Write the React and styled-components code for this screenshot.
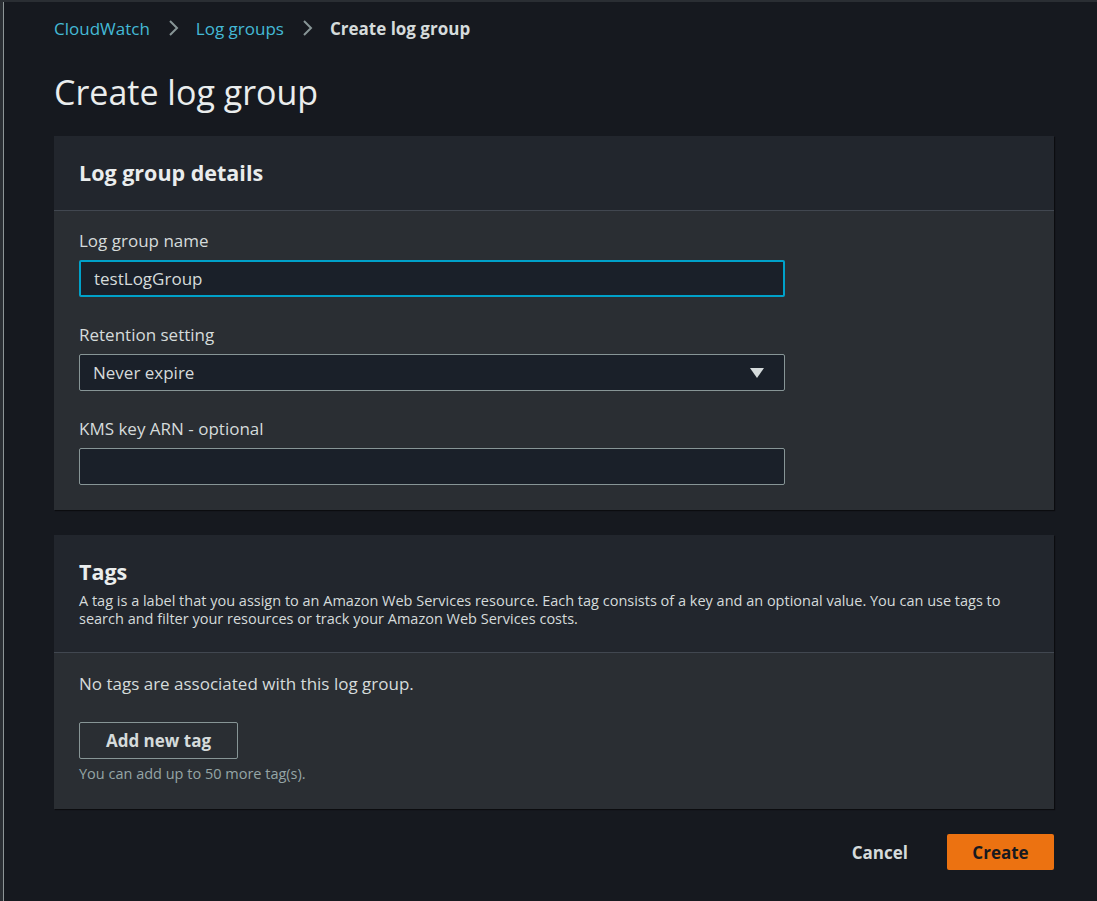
import React from 'react';
import styled, { createGlobalStyle } from 'styled-components';

const GlobalStyle = createGlobalStyle`
    html, body {
        margin: 0;
        padding: 0;
        background: #16191f;
    }
    body {
        font-family: "Open Sans", "Noto Sans", sans-serif;
        color: #d1d5db;
    }
`;

const Frame = styled.div`
    min-height: 901px;
    box-sizing: border-box;
    border-top: 2px solid #2a2e33;
    border-left: 3px solid #2a2e33;
    display: flex;
`;

const Edge = styled.div`
    width: 1px;
    background: #8d9596;
`;

const Page = styled.main`
    flex: 1;
    padding: 13px 43px 30px 50px;
    display: flex;
    flex-direction: column;
`;

const Crumbs = styled.nav`
    display: flex;
    align-items: center;
    gap: 17px;
    height: 26px;
    font-size: 17px;
`;

const CrumbLink = styled.a`
    color: #44b9d6;
    text-decoration: none;
`;

const CrumbCurrent = styled.span`
    color: #d5dbdb;
    font-weight: 700;
`;

const Title = styled.h1`
    margin: 31px 0 24px;
    font-size: 34px;
    font-weight: 400;
    color: #eaeded;
    line-height: 40px;
`;

const Panel = styled.section`
    background: #2a2e33;
    box-shadow: 1px 1px 1px rgba(0, 0, 0, 0.5);
    margin-bottom: 25px;
`;

const PanelHead = styled.header`
    background: #22262d;
    border-bottom: 1px solid #414750;
    padding: ${p => (p.$tall ? '23px 25px 24px' : '23px 25px 23px')};
`;

const PanelTitle = styled.h2`
    margin: 0;
    font-size: 21.5px;
    line-height: 28px;
    font-weight: 700;
    color: #eaeded;
`;

const PanelDesc = styled.p`
    margin: 6px 0 0;
    font-size: 14.5px;
    line-height: 18px;
    color: #d5dbdb;
`;

const PanelBody = styled.div`
    padding: ${p => p.$pad || '19px 25px 25px'};
    display: flex;
    flex-direction: column;
`;

const Field = styled.div`
    display: flex;
    flex-direction: column;
    margin-bottom: ${p => (p.$last ? '0' : '27px')};
`;

const Label = styled.label`
    font-size: 17px;
    line-height: 22px;
    margin-bottom: 8px;
    color: #d5dbdb;
`;

const TextInput = styled.div`
    box-sizing: border-box;
    width: 706px;
    height: 37px;
    background: #1a2029;
    border: ${p => (p.$focus ? '2px solid #00a1c9' : '1px solid #879596')};
    border-radius: 2px;
    display: flex;
    align-items: center;
    justify-content: space-between;
    padding: 0 ${p => (p.$focus ? '19px' : '20px')} 0 13px;
    font-size: 17px;
    color: #d5dbdb;
`;

const Caret = styled.span`
    width: 0;
    height: 0;
    border-left: 7px solid transparent;
    border-right: 7px solid transparent;
    border-top: 10px solid #d5dbdb;
`;

const Plain = styled.p`
    margin: 0 0 27px;
    font-size: 17px;
    line-height: 22px;
    color: #d5dbdb;
`;

const OutlineButton = styled.button`
    box-sizing: border-box;
    width: 159px;
    height: 37px;
    background: transparent;
    border: 1px solid #879596;
    border-radius: 2px;
    color: #d5dbdb;
    font-family: inherit;
    font-size: 17px;
    font-weight: 700;
    padding: 0;
`;

const Hint = styled.p`
    margin: 6px 0 0;
    font-size: 14.5px;
    line-height: 18px;
    color: #95a5a6;
`;

const Actions = styled.div`
    display: flex;
    justify-content: flex-end;
    align-items: center;
    gap: 39px;
`;

const TextButton = styled.button`
    background: none;
    border: none;
    padding: 0;
    color: #d5dbdb;
    font-family: inherit;
    font-size: 17px;
    font-weight: 700;
`;

const PrimaryButton = styled.button`
    width: 107px;
    height: 36px;
    background: #ec7211;
    border: none;
    border-radius: 2px;
    color: #16191f;
    font-family: inherit;
    font-size: 17px;
    font-weight: 700;
`;

const Chevron = () => (
    <svg width="12" height="18" viewBox="0 0 12 18" fill="none">
        <path d="M3 2l7 7-7 7" stroke="#879596" strokeWidth="2" />
    </svg>
);

const App = () => (
    <>
        <GlobalStyle />
        <Frame>
            <Edge />
            <Page>
                <Crumbs>
                    <CrumbLink href="#">CloudWatch</CrumbLink>
                    <Chevron />
                    <CrumbLink href="#">Log groups</CrumbLink>
                    <Chevron />
                    <CrumbCurrent>Create log group</CrumbCurrent>
                </Crumbs>
                <Title>Create log group</Title>

                <Panel>
                    <PanelHead>
                        <PanelTitle>Log group details</PanelTitle>
                    </PanelHead>
                    <PanelBody>
                        <Field>
                            <Label>Log group name</Label>
                            <TextInput $focus>testLogGroup</TextInput>
                        </Field>
                        <Field>
                            <Label>Retention setting</Label>
                            <TextInput>
                                Never expire
                                <Caret />
                            </TextInput>
                        </Field>
                        <Field $last>
                            <Label>KMS key ARN - optional</Label>
                            <TextInput />
                        </Field>
                    </PanelBody>
                </Panel>

                <Panel>
                    <PanelHead $tall>
                        <PanelTitle>Tags</PanelTitle>
                        <PanelDesc>
                            A tag is a label that you assign to an Amazon Web Services resource. Each tag consists of a key and an optional value. You can use tags to search and filter your resources or track your Amazon Web Services costs.
                        </PanelDesc>
                    </PanelHead>
                    <PanelBody $pad="20px 25px 26px">
                        <Plain>No tags are associated with this log group.</Plain>
                        <div>
                            <OutlineButton>Add new tag</OutlineButton>
                        </div>
                        <Hint>You can add up to 50 more tag(s).</Hint>
                    </PanelBody>
                </Panel>

                <Actions>
                    <TextButton>Cancel</TextButton>
                    <PrimaryButton>Create</PrimaryButton>
                </Actions>
            </Page>
        </Frame>
    </>
);

export default App;
